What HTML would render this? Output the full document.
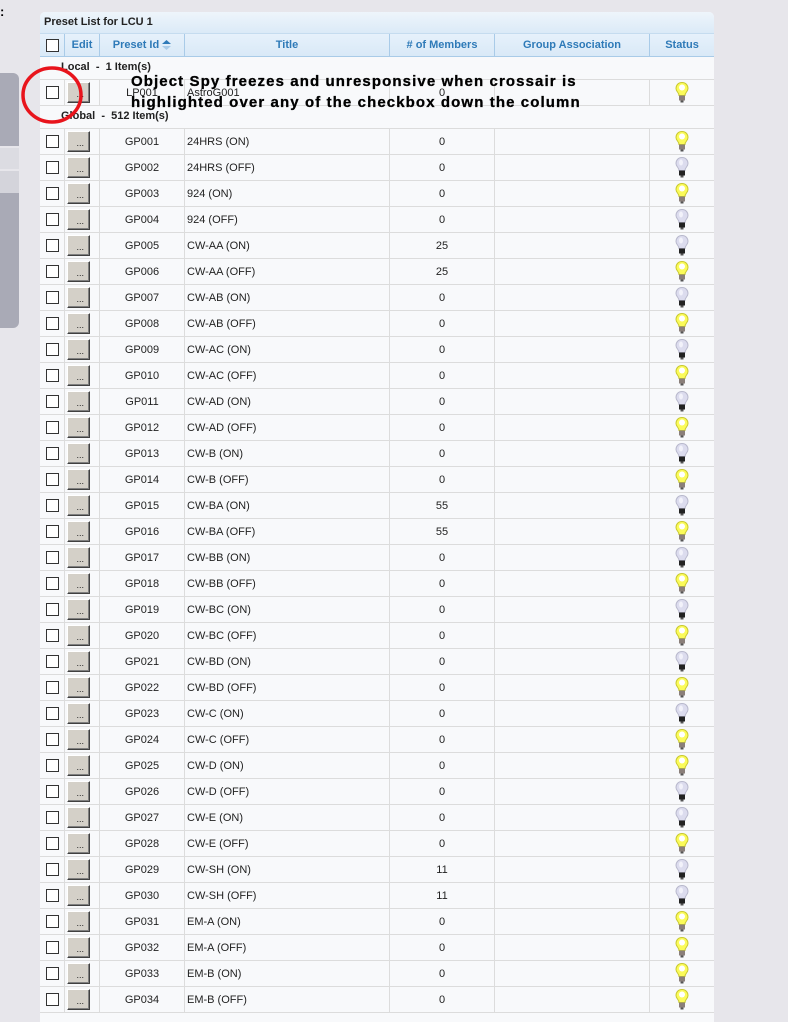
<!DOCTYPE html>
<html><head><meta charset="utf-8"><style>
body{margin:0;width:788px;height:1012px;background:#e7e6eb;font-family:"Liberation Sans",Arial,sans-serif;overflow:hidden;position:relative}
.abs{position:absolute}
#panel{left:40px;top:12px;width:674px;height:1010px;background:#f8f9fb;border-radius:5px 5px 0 0;overflow:hidden}
#tb{height:21px;background:linear-gradient(#eef5fb,#dbeaf7);font-size:11px;font-weight:bold;color:#222;line-height:21px;padding-left:4px;border-bottom:1px solid #c5dcef}
.row{display:grid;grid-template-columns:25px 35px 85px 205px 105px 155px 64px;height:26px;border-bottom:1px solid #dcdcdc;box-sizing:border-box;font-size:11px;color:#222}
.row>div{border-right:1px solid #dcdcdc;display:flex;align-items:center;justify-content:center;box-sizing:border-box}
.row>div:last-child{border-right:none}
.row>div.t{justify-content:flex-start;padding-left:2px}
.row>div.e{justify-content:flex-start;padding-left:2px}
.hd{height:23px;background:linear-gradient(#e6f1fb,#d9e9f7);border-bottom:1px solid #a9cbe8;font-weight:bold;color:#2e7ab8}
.hd>div{border-right:1px solid #a9cbe8}
.cb{width:11px;height:11px;border:1px solid #333;background:#fff}
.bt{width:23px;height:21px;background:#d4d0c8;border:1px solid;border-color:#fff #404040 #404040 #fff;box-shadow:inset -1px -1px #808080;font-size:9px;display:flex;align-items:flex-end;justify-content:flex-end;padding:0 5px 3px 0;box-sizing:border-box}
.grp{height:23px;font-size:11px;font-weight:bold;color:#222;line-height:21px;padding-left:21px;border-bottom:1px solid #dcdcdc;box-sizing:border-box}
</style></head><body>
<div class="abs" style="left:0;top:4px;font-size:13px;font-weight:bold">:</div>
<div class="abs" style="left:0;top:73px;width:19px;height:73px;background:#a9aab6;border-radius:0 6px 0 0"></div>
<div class="abs" style="left:0;top:148px;width:19px;height:21px;background:#dcdce2"></div>
<div class="abs" style="left:0;top:171px;width:19px;height:22px;background:#d4d4db"></div>
<div class="abs" style="left:0;top:193px;width:19px;height:135px;background:#a9aab6;border-radius:0 0 6px 0"></div>
<div id="panel" class="abs">
<div id="tb">Preset List for LCU 1</div>
<div class="row hd"><div><span class="cb"></span></div><div>Edit</div><div>Preset Id&nbsp;<svg width="9" height="10"><path d="M0 4L4.5 0L9 4Z" fill="#2e7ab8"/><path d="M0 6L4.5 10L9 6Z" fill="#a9cbe8"/></svg></div><div>Title</div><div># of Members</div><div>Group Association</div><div>Status</div></div>
<div class="grp">Local &nbsp;- &nbsp;1 Item(s)</div>
<div id="local"></div>
<div class="grp">Global &nbsp;- &nbsp;512 Item(s)</div>
<div id="rows"></div>
</div>
<svg class="abs" style="left:0;top:0" width="788" height="1012">
<ellipse cx="52" cy="95" rx="29" ry="27" fill="none" stroke="#e8141c" stroke-width="3.5"/>
<text x="131" y="86" font-family="Liberation Sans" font-weight="bold" font-size="15" letter-spacing="1.1" stroke="#000" stroke-width="0.3">Object Spy freezes and unresponsive when crossair is</text>
<text x="131" y="107" font-family="Liberation Sans" font-weight="bold" font-size="15" letter-spacing="1.1" stroke="#000" stroke-width="0.3">highlighted over any of the checkbox down the column</text>
</svg>
<script>
function bulb(on){var g=on?'#fbfb5a':'#dcdcee',s=on?'#c8c830':'#b8b8cc',b=on?'#8a7f7a':'#222';
return '<svg width="16" height="23" viewBox="0 0 16 22"><path d="M8 1C4 1 2 4 2 7C2 10 5 11 5 14L11 14C11 11 14 10 14 7C14 4 12 1 8 1Z" fill="'+g+'" stroke="'+s+'"/>'+(on?'<circle cx="8" cy="6" r="3" fill="#fff"/>':'<ellipse cx="7" cy="6" rx="2" ry="3" fill="#f2f2fa"/>')+'<rect x="5" y="14" width="6" height="5" fill="'+b+'"/><rect x="6.5" y="19" width="3" height="2" fill="#555"/></svg>';}
function row(id,t,m,on){return '<div class="row"><div><span class="cb"></span></div><div class="e"><span class="bt">...</span></div><div>'+id+'</div><div class="t">'+t+'</div><div>'+m+'</div><div></div><div>'+bulb(on)+'</div></div>';}
document.getElementById('local').innerHTML=row('LP001','AstroG001','0',1);
var t=['24HRS','924','CW-AA','CW-AB','CW-AC','CW-AD','CW-B','CW-BA','CW-BB','CW-BC','CW-BD','CW-C','CW-D','CW-E','CW-SH','EM-A','EM-B'];
var on='101001'+'0101010101010101'+'01100100'+'1111';
var h='';for(var i=0;i<34;i++){var n=i+1,nm=t[i>>1]+(i%2?' (OFF)':' (ON)');var m=(n==5||n==6)?25:(n==15||n==16)?55:(n==29||n==30)?11:0;
h+=row('GP0'+(n<10?'0':'')+n,nm,m,on[i]=='1');}
document.getElementById('rows').innerHTML=h;
</script>
</body></html>
